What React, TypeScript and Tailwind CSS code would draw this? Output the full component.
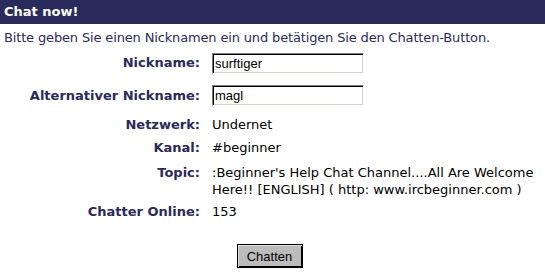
import React from "react";

const label = "text-right font-bold text-[13px] text-[#2a2a5c] leading-[16px]";
const value = "text-[13px] text-black leading-[16px]";

export default function App() {
  return (
    <div className="w-[545px] h-[275px] bg-white overflow-hidden" style={{ fontFamily: '"DejaVu Sans", Verdana, sans-serif' }}>
      <div className="h-[24px] bg-[#2a2b5d] flex items-center pl-[4px]">
        <span className="text-white font-bold text-[13px] leading-[16px]">Chat now!</span>
      </div>
      <p className="pl-[4px] mt-[6px] text-[13px] leading-[16px] text-[#2a2a5c] tracking-[-0.15px]">
        Bitte geben Sie einen Nicknamen ein und betätigen Sie den Chatten-Button.
      </p>
      <div className="grid grid-cols-[200px_1fr] gap-x-[12px] mt-[2px]">
        <div className={`${label} h-[30px] flex items-center justify-end`}>Nickname:</div>
        <div className="h-[30px] flex items-center">
          <input
            defaultValue="surftiger"
            className="w-[152px] h-[21px] px-[2px] text-[13px] text-black bg-white border border-t-[#808080] border-l-[#808080] border-b-white border-r-white shadow-[inset_1px_1px_0_#000,inset_-1px_-1px_0_#d4d0c8] outline-none"
            style={{ fontFamily: '"Liberation Sans", Arial, sans-serif' }}
          />
        </div>
        <div className={`${label} h-[34px] flex items-center justify-end pt-[2px]`}>Alternativer Nickname:</div>
        <div className="h-[34px] flex items-center">
          <input
            defaultValue="magl"
            className="w-[152px] h-[21px] px-[2px] text-[13px] text-black bg-white border border-t-[#808080] border-l-[#808080] border-b-white border-r-white shadow-[inset_1px_1px_0_#000,inset_-1px_-1px_0_#d4d0c8] outline-none"
            style={{ fontFamily: '"Liberation Sans", Arial, sans-serif' }}
          />
        </div>
        <div className={`${label} h-[26px] flex items-center justify-end`}>Netzwerk:</div>
        <div className={`${value} h-[26px] flex items-center`}>Undernet</div>
        <div className={`${label} h-[20px] flex items-center justify-end`}>Kanal:</div>
        <div className={`${value} h-[20px] flex items-center`}>#beginner</div>
        <div className={`${label} h-[44px] pt-[6px] leading-[17px]`}>Topic:</div>
        <div className={`${value} h-[44px] pt-[6px] leading-[17px] whitespace-nowrap`}>
          :Beginner's Help Chat Channel....All Are Welcome
          <br />
          Here!! [ENGLISH] ( http: www.ircbeginner.com )
        </div>
        <div className={`${label} h-[20px] flex items-center justify-end`}>Chatter Online:</div>
        <div className={`${value} h-[20px] flex items-center`}>153</div>
      </div>
      <div className="w-[539px] flex justify-center mt-[22px]">
        <button
          className="w-[66px] h-[24px] bg-[#bcbcbc] border border-black shadow-[inset_1px_1px_0_#e0e0e0,inset_-1px_-1px_0_#000] text-[13px] text-black leading-none"
          style={{ fontFamily: '"Liberation Sans", Arial, sans-serif' }}
        >
          Chatten
        </button>
      </div>
    </div>
  );
}
